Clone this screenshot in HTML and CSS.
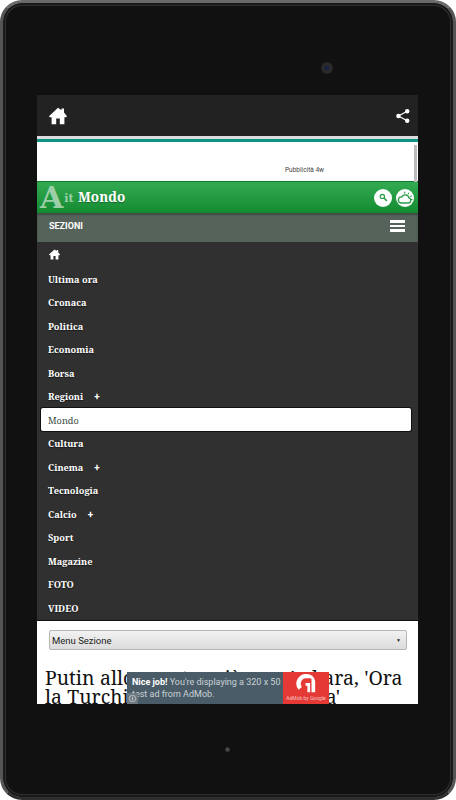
FILE: index.html
```html
<!DOCTYPE html>
<html lang="it">
<head>
<meta charset="utf-8">
<title>Mondo</title>
<link rel="stylesheet" href="styles.css">
</head>
<body>
<div class="tablet">
  <div class="camera"></div>
  <div class="sensor"></div>
  <div class="screen">
    <div class="actionbar">
      <svg class="ab-home" viewBox="0 0 18 18" width="18" height="18"><path fill="#fff" d="M9 .8 0 9.200l.9 1H2.600V17.200H7.200V11.500h3.600v5.700h4.600V10.200h1.700l.9-1L15 5.500V1.500H12.500V3.200Z"/></svg>
      <svg class="ab-share" viewBox="0 0 14 14" width="14" height="14"><g fill="#fff"><circle cx="11.200" cy="2.300" r="2.200"/><circle cx="11.200" cy="11.700" r="2.200"/><circle cx="2.400" cy="7" r="2.200"/></g><path fill="none" stroke="#fff" stroke-width="1.200" d="M11.200 2.300 2.400 7l8.800 4.700"/></svg>
    </div>
    <div class="web">
      <div class="adtop">
        <div class="teal"></div>
        <div class="adlabel">Pubblicità 4w</div>
      </div>
      <div class="scrollbar"></div>
      <header class="greenbar">
        <div class="logo"><span class="logo-a">A</span><span class="logo-it">it</span></div>
        <div class="title">Mondo</div>
        <div class="roundbtn">
          <svg viewBox="0 0 12 12" width="9" height="9"><circle cx="4.500" cy="4.500" r="2.800" fill="none" stroke="#2a9a49" stroke-width="1.600"/><path d="m6.700 6.700 3.800 3.800" stroke="#2a9a49" stroke-width="2"/></svg>
        </div>
        <div class="roundbtn">
          <svg viewBox="0 0 16 16" width="16" height="16"><path d="M4 13h7.500a2.600 2.600 0 0 0 .4-5.100A3.800 3.800 0 0 0 4.800 7 3 3 0 0 0 4 13Z" fill="none" stroke="#2a9a49" stroke-width="1.300"/><path d="M8 3.500 7.500 1.700M11 4.300l1-1.600M13 6.500l1.700-.8M14 9.500h1.500" stroke="#2a9a49" stroke-width="1.100"/></svg>
        </div>
      </header>
      <div class="sezioni">
        <span>SEZIONI</span>
        <div class="burger"><i></i><i></i><i></i></div>
      </div>
      <nav class="menu">
        <a class="mi mi-home"><svg viewBox="0 0 18 18" width="11" height="11"><path fill="#fff" d="M9 1 0 9.200l.9 1H2.600V17H7.200V11.500h3.600V17h4.600V10.200h1.700l.9-1L15 5.500V1.500H12.500V3.200Z"/></svg></a>
        <a class="mi">Ultima ora</a>
        <a class="mi">Cronaca</a>
        <a class="mi">Politica</a>
        <a class="mi">Economia</a>
        <a class="mi">Borsa</a>
        <a class="mi">Regioni<b class="plus">+</b></a>
        <a class="mi active">Mondo</a>
        <a class="mi">Cultura</a>
        <a class="mi">Cinema<b class="plus">+</b></a>
        <a class="mi">Tecnologia</a>
        <a class="mi">Calcio<b class="plus">+</b></a>
        <a class="mi">Sport</a>
        <a class="mi">Magazine</a>
        <a class="mi">FOTO</a>
        <a class="mi">VIDEO</a>
      </nav>
      <div class="content">
        <div class="select"><span>Menu Sezione</span><span class="caret">▼</span></div>
        <h1 class="headline">Putin allo scontro già con Ankara, 'Ora la Turchia si pentirà della follia'</h1>
      </div>
    </div>
    <div class="admob">
      <div class="ad-text"><b>Nice job!</b> You're displaying a 320 x 50 test ad from AdMob.</div>
      <div class="ad-logo">
        <svg viewBox="0 0 24 24" width="22" height="22"><path fill="#fff" d="M12 1a10.500 10.500 0 0 0-8 17.300l3.500-3A6 6 0 0 1 12 5.700h4.500a1.500 1.500 0 0 1 1.500 1.500V21h4V9A9 9 0 0 0 13 1Z"/><path fill="#fff" d="M11.500 11h5v10h-3v-7h-2Z"/></svg>
        <span class="ad-by">AdMob by Google</span>
      </div>
      <div class="ad-info"><svg viewBox="0 0 11 11" width="11" height="11"><circle cx="5.500" cy="5.500" r="3.200" fill="none" stroke="#ccc" stroke-width=".8"/><path d="M5.500 4v3.200" stroke="#ccc" stroke-width=".9"/></svg></div>
    </div>
  </div>
</div>
</body>
</html>
```
FILE: styles.css
```css
* { box-sizing: border-box; }
html, body { margin: 0; padding: 0; background: #fff; }
body { width: 456px; height: 800px; overflow: hidden; }

.tablet {
  position: relative;
  width: 456px;
  height: 800px;
  padding: 92px 35px 93px 34px;
  background: #111;
  border-radius: 22px;
  border: 3px solid;
  border-color: #6a6a6a #555 #2e2e2e #555;
  box-shadow: inset 0 0 0 2px #1a1a1a, inset 0 0 0 3px #2e2e2e;
  background-clip: padding-box;
}

.camera {
  position: absolute;
  left: 318px; top: 59px;
  width: 12px; height: 12px;
  border-radius: 50%;
  background: radial-gradient(circle, #1a2340 0 2px, #2a2a2a 3px 5px, #222 6px);
}
.sensor {
  position: absolute;
  left: 222px; top: 744px;
  width: 5px; height: 5px;
  border-radius: 50%;
  background: radial-gradient(circle, #555 0, #222 100%);
}

.screen {
  position: relative;
  width: 381px;
  height: 609px;
  background: #fff;
  overflow: hidden;
  display: flex;
  flex-direction: column;
}

.actionbar {
  flex: none;
  height: 41px;
  background: #222;
  display: flex;
  align-items: center;
  justify-content: space-between;
  padding: 0 8px 0 12px;
}
.ab-home { margin-top: 1px; }
.ab-share { margin-top: 1px; }

.web { position: relative; flex: 1; min-height: 0; overflow: hidden; display: flex; flex-direction: column; }

.adtop {
  flex: none;
  height: 45px;
  background: #fff;
  border-top: 3px solid #dcdcdc;
  position: relative;
}
.teal { height: 3px; background: #0d9384; }
.adlabel {
  font: 6.500px "Roboto", "Liberation Sans", sans-serif;
  color: #444;
  padding: 24px 0 0 248px;
}
.scrollbar {
  position: absolute;
  right: 1px; top: 9px;
  width: 3px; height: 37px;
  background: #bcbcbc;
}

.greenbar {
  flex: none;
  height: 32px;
  background: linear-gradient(#33ab52, #148a31);
  border-top: 1px solid #0e7a2a;
  display: flex;
  align-items: center;
  gap: 4px;
  padding-right: 4px;
}
.logo {
  width: 34px;
  height: 30px;
  margin-left: 3px;
  display: flex;
  align-items: center;
  font-family: "DejaVu Serif", serif;
  font-weight: 700;
  color: #9ccfa8;
  white-space: nowrap;
}
.logo-a { font-size: 30px; line-height: 30px; margin-right: 1px; }
.logo-it { font-size: 11px; line-height: 12px; margin-top: 2px; }
.title {
  font: 700 13.500px "Noto Serif", "DejaVu Serif", serif;
  color: #fff;
  flex: 1;
  margin-top: -2px;
  text-shadow: 0 1px 1px rgba(0,0,0,.3);
}
.roundbtn {
  width: 18px; height: 18px;
  border-radius: 50%;
  background: #fff;
  display: flex;
  align-items: center;
  justify-content: center;
}

.sezioni {
  flex: none;
  height: 29px;
  background: #55635a;
  box-shadow: inset 0 2px 2px rgba(0,0,0,.25);
  display: flex;
  align-items: center;
  justify-content: space-between;
  padding: 0 13px 3px 12px;
  font: 700 9px "Roboto", "Liberation Sans", sans-serif;
  color: #fff;
}
.burger { width: 15px; display: flex; flex-direction: column; gap: 2px; }
.burger i { display: block; height: 2.500px; background: #fff; }

.menu {
  flex: none;
  height: 379px;
  background: #303030;
  display: flex;
  flex-direction: column;
  padding: 1px 7px 0 4px;
  border-bottom: 1px solid #111;
}
.mi {
  flex: none;
  height: 23.500px;
  display: flex;
  align-items: center;
  padding: 2px 0 0 7px;
  font: 700 9.200px "Noto Serif", "DejaVu Serif", serif;
  color: #fff;
  text-shadow: 0 1px 1px rgba(0,0,0,.5);
}
.mi-home { padding: 0 0 0 8px; }
.active {
  background: #fff;
  color: #34483c;
  font-weight: 400;
  text-shadow: none;
  border-radius: 2px;
  box-shadow: 0 0 0 1px #111;
}
.plus { margin-left: 11px; font: 700 10px "Roboto", sans-serif; }

.content { flex: 1; background: #fff; padding: 9px 11px 0 7px; min-height: 0; overflow: hidden; }
.select {
  height: 20px;
  margin: 0 0 0 5px;
  border: 1px solid #b5b5b5;
  border-radius: 2px;
  background: linear-gradient(#f2f2f2, #dcdcdc);
  display: flex;
  align-items: center;
  justify-content: space-between;
  padding: 0 5px 0 2px;
  font: 9.500px "Roboto", "Liberation Sans", sans-serif;
  color: #222;
}
.caret { font-size: 5px; }
.headline {
  margin: 18px 0 0 1px;
  font: 400 19.400px/19px "Noto Serif", "DejaVu Serif", serif;
  word-spacing: .4px;
  color: #111;
}

.admob {
  position: absolute;
  left: 90px; bottom: 0;
  width: 202px; height: 32px;
  background: #4a5c67;
  display: flex;
}
.ad-text {
  flex: 1;
  padding: 4px 0 0 5px;
  font: 400 9px/12px "Roboto", "Liberation Sans", sans-serif;
  color: #c9d2d6;
}
.ad-text b { color: #fff; font-weight: 700; }
.ad-logo {
  width: 46px;
  background: #e53935;
  display: flex;
  flex-direction: column;
  align-items: center;
  color: #f5c5c4;
  padding-top: 1px;
  white-space: nowrap;
}
.ad-by { font: 5px/7px "Roboto", sans-serif; }
.ad-info {
  position: absolute;
  left: 0; bottom: 0;
  width: 11px; height: 11px;
  background: #6d7a82;
  display: flex;
}
```
